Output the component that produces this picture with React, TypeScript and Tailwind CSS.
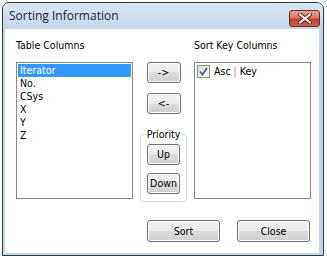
import React from "react";

const body = { fontFamily: '"DejaVu Sans Condensed", "DejaVu Sans", Tahoma, sans-serif' };

const columns = ["Iterator", "No.", "CSys", "X", "Y", "Z"];

function WinButton({ label, className = "" }: { label: string; className?: string }) {
  return (
    <button
      className={`flex items-center justify-center rounded-[3px] border border-[#707070] bg-[linear-gradient(#f2f2f2_0%,#ebebeb_50%,#dddddd_50%,#cfcfcf_100%)] text-[10.5px] leading-none text-black shadow-[inset_0_0_0_1px_#fcfcfc] ${className}`}
    >
      {label}
    </button>
  );
}

function CloseGlyph() {
  return (
    <svg width="14" height="11" viewBox="0 0 14 11">
      <path d="M2 1.5 L12 9.5 M12 1.5 L2 9.5" stroke="#5a1d17" strokeWidth="4" strokeLinecap="square" />
      <path d="M2 1.5 L12 9.5 M12 1.5 L2 9.5" stroke="#ffffff" strokeWidth="2" strokeLinecap="square" />
    </svg>
  );
}

function CheckBox() {
  return (
    <span className="flex h-[13px] w-[13px] shrink-0 items-center justify-center border border-[#8e8f8f] bg-[linear-gradient(135deg,#dcdcdc,#fbfbfb)]">
      <svg width="9" height="9" viewBox="0 0 9 9">
        <path d="M1 4.5 L3.5 7.5 L8 1" fill="none" stroke="#4a5f97" strokeWidth="1.8" />
      </svg>
    </span>
  );
}

export default function App() {
  return (
    <div className="h-[258px] w-[327px] bg-white" style={body}>
      <div className="ml-[2px] mt-[2px] flex h-[254px] w-[322px] flex-col rounded-t-[7px] border border-[#2f3640] bg-[#bcd9f0]">
        {/* title bar */}
        <div className="flex h-[26px] shrink-0 items-center justify-between rounded-t-[6px] bg-[linear-gradient(#dae7f5,#c3d6ec)] pl-[6px] pr-[3px]">
          <span className="text-[12px] text-[#1e1e1e]" style={{ fontFamily: '"Open Sans", "Noto Sans", sans-serif' }}>
            Sorting Information
          </span>
          <span className="mt-[4px] flex h-[17px] w-[31px] items-center justify-center rounded-[3px] border border-[#6b2a22] bg-[linear-gradient(#e8a493_0%,#d67862_45%,#c3432d_55%,#d0604a_100%)]">
            <CloseGlyph />
          </span>
        </div>

        {/* client area */}
        <div className="mb-[2px] ml-[2px] mr-[4px] flex flex-1 flex-col bg-white pl-[11px] pt-[10px]">
          <div className="flex gap-[7px]">
            <div className="w-[117px]">
              <div className="h-[23px] text-[10.5px] leading-[13px] text-black">Table Columns</div>
              <div className="h-[137px] border border-[#828790] p-[1px]">
                {columns.map((c, i) => (
                  <div
                    key={c}
                    className={`h-[13px] pl-[2px] text-[10.5px] leading-[13px] ${i === 0 ? "bg-[#3399ff] text-white" : "text-black"}`}
                  >
                    {c}
                  </div>
                ))}
              </div>
            </div>

            <div className="flex w-[47px] flex-col items-center pt-[23px]">
              <WinButton label="->" className="h-[21px] w-[34px]" />
              <WinButton label="<-" className="mt-[10px] h-[21px] w-[34px]" />
              <div className="relative mt-[20px] flex h-[68px] w-[47px] flex-col items-center rounded-[3px] border border-[#d5dfe5] pt-[9px]">
                <span className="absolute -top-[7px] bg-white px-[1px] text-[10.5px] leading-[13px] text-black">Priority</span>
                <WinButton label="Up" className="h-[21px] w-[33px]" />
                <WinButton label="Down" className="mt-[8px] h-[21px] w-[33px]" />
              </div>
            </div>

            <div className="w-[117px]">
              <div className="h-[23px] text-[10.5px] leading-[13px] text-black">Sort Key Columns</div>
              <div className="h-[137px] border border-[#828790] px-[2px] pt-[2px]">
                <div className="flex items-center gap-[4px]">
                  <CheckBox />
                  <span className="text-[10.5px] leading-[13px] text-black">
                    Asc <span className="text-[#d9822b]">|</span> Key
                  </span>
                </div>
              </div>
            </div>
          </div>

          <div className="mt-auto mb-[11px] flex gap-[17px] pl-[131px]">
            <WinButton label="Sort" className="h-[22px] w-[73px]" />
            <WinButton label="Close" className="h-[22px] w-[73px]" />
          </div>
        </div>
      </div>
    </div>
  );
}
